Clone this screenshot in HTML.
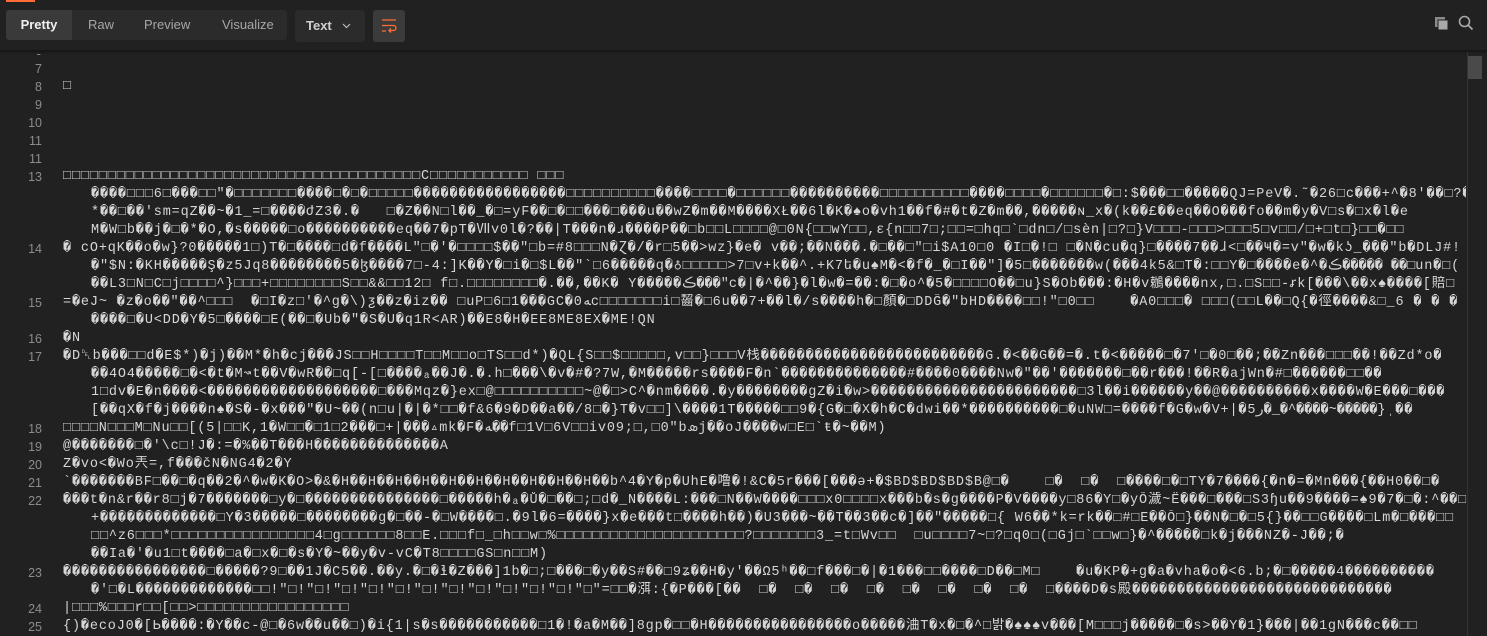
<!DOCTYPE html>
<html><head><meta charset="utf-8"><style>
*{margin:0;padding:0;box-sizing:border-box}
body{width:1487px;height:636px;background:#212121;overflow:hidden;position:relative;font-family:"Liberation Sans",sans-serif}
.acc{position:absolute;left:6px;top:0;width:29px;height:2px;background:#ff6c37}
.tabs{position:absolute;left:6px;top:10px;width:281px;height:30px;background:#2b2b2b;border-radius:3px}
.tab{position:absolute;top:0;height:30px;line-height:30px;font-size:13px;color:#a6a6a6}
.tab.on{background:#3a3a3a;color:#f0f0f0;border-radius:3px 0 0 3px;left:0;width:66px;text-align:center;font-weight:bold}
.sel{position:absolute;left:295px;top:10px;width:70px;height:32px;background:#2b2b2b;border-radius:3px;color:#cfcfcf;font-size:13px;font-weight:bold;line-height:32px;padding-left:11px}
.wrap{position:absolute;left:373px;top:10px;width:32px;height:32px;background:#3b3b3b;border-radius:3px}
.shadow{position:absolute;left:0;top:50px;width:1487px;height:4px;background:linear-gradient(#151515,#212121)}
.code{position:absolute;left:0;top:0;width:1466px;height:636px;overflow:hidden;font-family:"Liberation Mono","DejaVu Sans Mono","Noto Sans CJK SC",monospace;font-size:13.5px;color:#d6d6d6}
.r{position:absolute;left:0;height:18px;line-height:18px;white-space:pre;width:1466px;overflow:hidden}
.n{position:absolute;left:0;width:42px;text-align:right;color:#8c8c8c;font-family:"Liberation Sans",sans-serif;font-size:12.5px}
.t{position:absolute;left:63px;letter-spacing:0.85px}
.c{left:91px}
.sb{position:absolute;left:1467px;top:52px;width:1px;height:584px;background:#333}
.th{position:absolute;left:1468px;top:56px;width:14px;height:23px;background:#4a4a4a}
</style></head><body>
<div class="code">
<div class="r" style="top:42px"><span class="n">6</span></div>
<div class="r" style="top:60px"><span class="n">7</span></div>
<div class="r" style="top:78px"><span class="n">8</span><span class="t">□</span></div>
<div class="r" style="top:96px"><span class="n">9</span></div>
<div class="r" style="top:114px"><span class="n">10</span></div>
<div class="r" style="top:132px"><span class="n">11</span></div>
<div class="r" style="top:150px"><span class="n">11</span></div>
<div class="r" style="top:168px"><span class="n">13</span><span class="t">□□□□□□□□□□□□□□□□□□□□□□□□□□□□□□□□□□□□□□□□C□□□□□□□□□□□ □□□</span></div>
<div class="r" style="top:186px"><span class="t c">����□□□6□���□□"�□□□□□□□����□�□�□□□□□�����������������□□□□□□□□□□����□□□□�□□□□□□����������□□□□□□□□□□����□□□□�□□□□□□�□:$���□□�����QJ=PeV�.˜�26□c���+^�8'��□?����\�s!□$</span></div>
<div class="r" style="top:204px"><span class="t c">*��□��'sm=qZ��~�1_=□����ժZ3�.�   □�Z��N□l��_�□=yF��□�□□���□���u��wZ�m��M����XŁ��6l�K�♠o�vh1��f�#�t�Z�m��,�����ɴ_x�(k��£��eq��O���fo��m�y�V□s�□x�l�e</span></div>
<div class="r" style="top:222px"><span class="t c">M�W□b��j�□�*�O,�s�����□o����������eq��7�pT�Ⅶv0l�?��|T���n�ɹ����P��□b□□L□□□□@□0N{□□wY□□,ɛ{n□□7□;□□=□hq□`□dn□/□sèn|□?□}V□□□-□□□&gt;□□□5□v□□/□+□t□}□□�□□</span></div>
<div class="r" style="top:240px"><span class="n">14</span><span class="t">� cO+qK��o�w}?0�����1□)T�□����□d�f����L"□�'�□□□□$��"□b=#8□□□N�Ɀ�/�r□5��&gt;wz}�e� v��;��N���.�□��□"□i$A10□0 �I□�!□ □�N�cu�q}□����7��ɺ&lt;□��Ҹ�=v"�w�kʖ_���"b�DLJ#!</span></div>
<div class="r" style="top:258px"><span class="t c">�"$N:�KH�����Ş�z5Jq8��������5�ɮ����7□-4:]K��Y�□i�□$L��"`□6�����q�♁□□□□□&gt;7□v+k��^.+K7ե�u♠M�&lt;�f�_�□I��"]�5□�������w(���4k5&amp;□T�:□□Y�□����e�^�ڪ����� ��□un�□(</span></div>
<div class="r" style="top:276px"><span class="t c">��L3□N□C□j□□□□^}□□□+□□□□□□□□S□□&amp;&amp;□□12□ f□.□□□□□□□□�.��,��K� Y�����ڪ���"c�|�^��}�l�w�=��:�□�o^�5�□□□□O��□u}S�Ob���:�H�v鶒����nx,□.□S□□-ꭉk[���\��x♠����[賠□</span></div>
<div class="r" style="top:294px"><span class="n">15</span><span class="t">=�eJ~ �z�o��"��^□□□  �□I�z□'�^g�\)ƺ��z�iz�� □uP□6□1���GC�0ﻪc□□□□□□□i□齧�□6u��7+��l�/s����h�□顏�□DDĜ�"bHD����□□!"□0□□    �A0□□□� □□□(□□L��□Q{�徑����&amp;□_6 � � �</span></div>
<div class="r" style="top:312px"><span class="t c">����□�U&lt;DD�Y�5□����□E(��□�Ub�"�S�U�q1R&lt;AR)��E8�H�EE8ME8EX�ME!QN</span></div>
<div class="r" style="top:330px"><span class="n">16</span><span class="t">�N</span></div>
<div class="r" style="top:348px"><span class="n">17</span><span class="t">�D␡b���□□d�E$*)�j)��M*�h�cj���JS□□H□□□□T□□M□□o□TS□□d*)�QL{S□□$□□□□□,v□□}□□□V栈�������������������������G.�&lt;��G��=�.t�&lt;�����□�7'□�0□��;��Zn���□□□��!��Zd*o�</span></div>
<div class="r" style="top:366px"><span class="t c">��4O4�����□�&lt;�t�M↝t��V�wR��□q[-[□����ₐ��J�.�.h□���\�v�#�?7W,�M�����rs����F�n`��������������#����0����Nw�"��'�������□��r���!��R�ajWn�#□������□□��</span></div>
<div class="r" style="top:384px"><span class="t c">1□dv�E�n����&lt;�������������������□���Mqz�}ex□@□□□□□□□□□□~@�□&gt;C^�nm����.�y��������gZ�i�w&gt;�����������������������□3l��i������y��@����������x����W�E���□���</span></div>
<div class="r" style="top:402px"><span class="t c">[��qX�f�j����n♠�S�-�x���"�U~��(n□u|�|�*□□�f&amp;6�9�D��a��/8□�}T�v□□]\����1T�����□□9�{G�□�X�h�C�dwi��*����������□�uNW□=����f�G�w�V+|�ﺭ5�_�^����~�����}ˌ��</span></div>
<div class="r" style="top:420px"><span class="n">18</span><span class="t">□□□□N□□□M□Nu□□[(5|□□K,1�W□□�□1□2���□+|���▵mk�F�ﻪ��f□1V□6V□□iv09;□,□0"bܣj��oJ����w□E□`ŧ�~��M)</span></div>
<div class="r" style="top:438px"><span class="n">19</span><span class="t">@�������□�'\c□!J�:=�%��T���H��������������A</span></div>
<div class="r" style="top:456px"><span class="n">20</span><span class="t">Z�vo&lt;�Wo兲=,f���čN�NG4�2�Y</span></div>
<div class="r" style="top:474px"><span class="n">21</span><span class="t">`�������BF□��□�q��2�^�w�K�O&gt;�&amp;�H��H��H��H��H��H��H��H��H��H��b^4�Y�p�UhE�噜�!&amp;C�5r���[���ә+�$BD$BD$BD$B@□�    □�  □�  □����□�□TY�7����{�n�=�Mn���{��H0��□�</span></div>
<div class="r" style="top:492px"><span class="n">22</span><span class="t">���t�n&amp;r��r8□j�7�������□y�□���������������□�����h�ₐ�Ů�□��□;□d�_N����L:���□N��W����□□□x0□□□□x���b�s�g����P�V����y□86�Y□�yȬ濊~Ë���□���□S3ɧu��9����=♠9�7�□�:^��□</span></div>
<div class="r" style="top:510px"><span class="t c">+�������������□Y�3�����□��������g�□��-�□W����□.�9l�6=����}x�e���t□����h��)�U3���~��T��3��c�]��"�����□{ W6��*k=rk��□#□E��Ō□}��N�□�□5{}��□□G����□Lm�□���□□</span></div>
<div class="r" style="top:528px"><span class="t c">□□^z6□□□*□□□□□□□□□□□□□□□□4□g□□□□□□8□□E.□□□f□_□h□□w□%□□□□□□□□□□□□□□□□□□□□□?□□□□□□□3_=t□Wv□□  □u□□□□7~□?□q0□(□Gj□`□□w□}�^�����□k�j���NZ�-J��;�</span></div>
<div class="r" style="top:546px"><span class="t c">��Ia�'�u1□t����□a�□x�□�s�Y�~��y�v-vC�T8□□□□GS□n□□M)</span></div>
<div class="r" style="top:564px"><span class="n">23</span><span class="t">����������������□�����?9□��1J�C5��.��y.�□�ɬ�Z���]1b�□;□���□�y��S#��□9ʑ��H�y'��Ω5ʰ��□f���□�|�1���□□����□D��□M□    �u�KP�+g�a�vha�o�&lt;6.b;�□�����4����������</span></div>
<div class="r" style="top:582px"><span class="t c">�'□�L�������������□□!"□!"□!"□!"□!"□!"□!"□!"□!"□!"□!"□!"□"=□□�渳:{�P���[��  □�  □�  □�  □�  □�  □�  □�  □�  □����D�s殿�����������������������������</span></div>
<div class="r" style="top:600px"><span class="n">24</span><span class="t">|□□□%□□□r□□[□□&gt;□□□□□□□□□□□□□□□□□</span></div>
<div class="r" style="top:618px"><span class="n">25</span><span class="t">{)�ecoJ0�[Ь����:�Y��c-@□�6w��u��□)�i{1|s�s�����������□1�!�a�M��]8gp�□□�H����������������o�����浀T�x�□�^□밝�♠♠♠v���[M□□□j�����□�s&gt;��Y�1}���|��1gN���c��□□</span></div>
</div>
<div style="position:absolute;left:0;top:0;width:1487px;height:51px;background:#212121"></div>
<div class="shadow"></div>
<div class="acc"></div>
<div class="tabs">
<div class="tab on">Pretty</div>
<div class="tab" style="left:82px">Raw</div>
<div class="tab" style="left:138px">Preview</div>
<div class="tab" style="left:216px">Visualize</div>
</div>
<div class="sel">Text<svg style="position:absolute;left:47px;top:13px" width="9" height="6" viewBox="0 0 9 6"><path d="M1 1l3.5 3.5L8 1" stroke="#bbb" stroke-width="1.2" fill="none"/></svg></div>
<div class="wrap"><svg width="32" height="32" viewBox="0 0 32 32"><path d="M9 10h14M9 15.5h11.5a2.5 2.5 0 010 5H16M18 18.5l-2 2 2 2M9 21h4" stroke="#ff6c37" stroke-width="1.3" fill="none"/></svg></div>
<svg style="position:absolute;left:1434px;top:16px" width="16" height="16" viewBox="0 0 16 16"><rect x="1" y="1" width="10" height="10" fill="#8a8a8a"/><rect x="4" y="4" width="10" height="10" fill="#a8a8a8" stroke="#212121" stroke-width="1"/></svg>
<svg style="position:absolute;left:1458px;top:15px" width="16" height="17" viewBox="0 0 16 17"><circle cx="6.5" cy="6.5" r="5" stroke="#a8a8a8" stroke-width="1.6" fill="none"/><path d="M10 10l4.5 4.5" stroke="#a8a8a8" stroke-width="1.8"/></svg>
<div class="sb"></div><div class="th"></div>
</body></html>
